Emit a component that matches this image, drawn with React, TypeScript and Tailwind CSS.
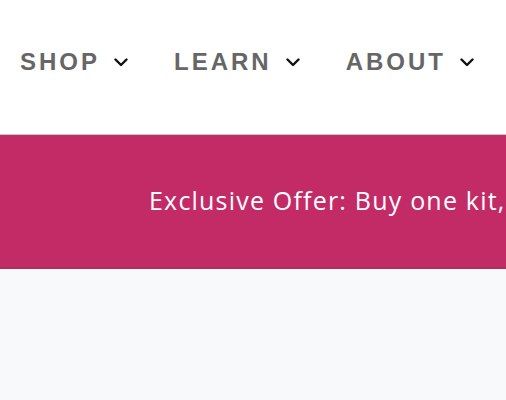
import { useState } from "react";

function Chevron() {
  return (
    <svg className="w-[14px] h-[9px]" viewBox="0 0 14 9" fill="none" stroke="#111" strokeWidth="2.4">
      <path d="M1.5 1.5 L7 7 L12.5 1.5" strokeLinecap="round" strokeLinejoin="round" />
    </svg>
  );
}

export default function App() {
  const [open, setOpen] = useState<string | null>(null);
  const items = ["Shop", "Learn", "About"];

  return (
    <div className="min-h-screen bg-[#f8f9fb]">
      {/* Top navigation */}
      <header className="h-[135px] bg-white border-b border-[#c9c9c9] flex items-center">
        <nav className="flex items-center gap-[46px] pl-5 -mt-[10px]">
          {items.map((item) => (
            <button
              key={item}
              onClick={() => setOpen(open === item ? null : item)}
              className="flex items-center gap-[14px] text-[#666] font-bold uppercase text-[24px] tracking-[3px] font-['Liberation_Sans',Arial,sans-serif]"
            >
              <span>{item}</span>
              <Chevron />
            </button>
          ))}
        </nav>
      </header>

      {/* Promo banner */}
      <div className="h-[134px] bg-[#c32b67] border-b-2 border-b-[#b42c60] flex items-center overflow-hidden">
        <p className="pl-[149px] whitespace-nowrap text-white text-[25px] tracking-[1.2px] font-['Open_Sans','Noto_Sans',sans-serif]">
          Exclusive Offer: Buy one kit,
        </p>
      </div>
    </div>
  );
}
